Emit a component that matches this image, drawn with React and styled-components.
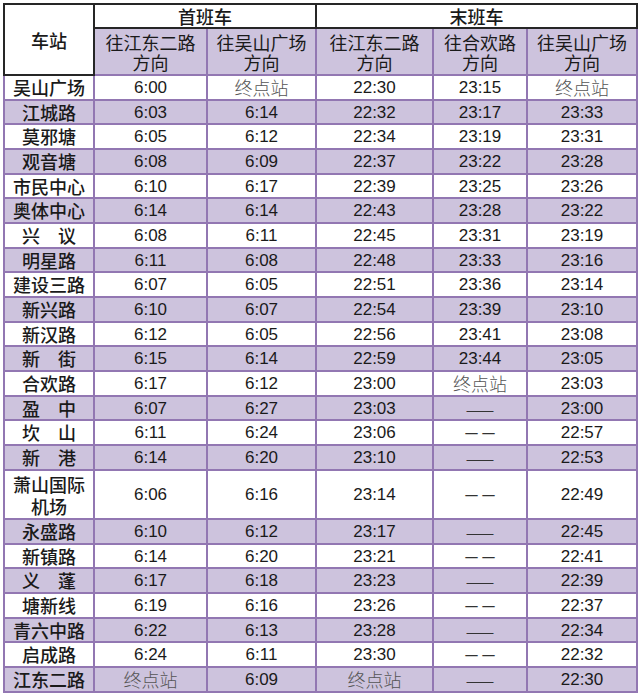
import React from "react";
import styled, { createGlobalStyle } from "styled-components";

const Global = createGlobalStyle`
  html, body { margin: 0; padding: 0; background: #ffffff; }
  body { font-family: "Liberation Sans", "Noto Sans CJK SC", sans-serif; color: #1a1a1a; }
`;

const PURPLE = "#9277b2";
const LAV = "#cdc3dd";
const DARK = "#262626";

const Page = styled.div`
  padding: 3px 0 0 3px;
`;

const Table = styled.table`
  border-collapse: collapse;
  table-layout: fixed;
  width: 633px;
`;

const HeadCell = styled.th`
  font-family: "Noto Sans CJK SC", sans-serif;
  font-weight: 500;
  font-size: 18px;
  line-height: 20px;
  padding: 0;
  text-align: center;
  color: #1a1a1a;
  background: ${(p) => (p.$lav ? LAV : "#ffffff")};
  border: 2px solid ${(p) => (p.$dark ? DARK : PURPLE)};
  height: ${(p) => p.$h}px;
`;

const SubHead = styled.div`
  display: flex;
  flex-direction: column;
  align-items: center;
  line-height: 20px;
  font-weight: 400;
`;

const Row = styled.tr`
  height: ${(p) => p.$h}px;
  background: ${(p) => (p.$lav ? LAV : "#ffffff")};
`;

const Cell = styled.td`
  padding: 0;
  text-align: center;
  vertical-align: middle;
  border: 2px solid ${PURPLE};
  font-size: 17px;
  line-height: 19px;
  color: #1a1a1a;
  font-family: ${(p) =>
    p.$kind === "num"
      ? `"Liberation Sans", Arial, sans-serif`
      : `"Noto Sans CJK SC", sans-serif`};
  ${(p) =>
    p.$kind === "end"
      ? `font-weight: 300; color: #555555; font-size: 18px;`
      : ""}
  ${(p) => (p.$kind === "dash" ? `color: #333333; font-size: 17px;` : "")}
`;

const Station = styled(Cell)`
  font-family: "Noto Sans CJK SC", sans-serif;
  font-size: 18px;
  font-weight: 500;
  line-height: ${(p) => (p.$double ? 22 : 19)}px;
  white-space: pre-line;
`;

const rows = [
  ["吴山广场", "6:00", "终点站", "22:30", "23:15", "终点站"],
  ["江城路", "6:03", "6:14", "22:32", "23:17", "23:33"],
  ["莫邪塘", "6:05", "6:12", "22:34", "23:19", "23:31"],
  ["观音塘", "6:08", "6:09", "22:37", "23:22", "23:28"],
  ["市民中心", "6:10", "6:17", "22:39", "23:25", "23:26"],
  ["奥体中心", "6:14", "6:14", "22:43", "23:28", "23:22"],
  ["兴　议", "6:08", "6:11", "22:45", "23:31", "23:19"],
  ["明星路", "6:11", "6:08", "22:48", "23:33", "23:16"],
  ["建设三路", "6:07", "6:05", "22:51", "23:36", "23:14"],
  ["新兴路", "6:10", "6:07", "22:54", "23:39", "23:10"],
  ["新汉路", "6:12", "6:05", "22:56", "23:41", "23:08"],
  ["新　街", "6:15", "6:14", "22:59", "23:44", "23:05"],
  ["合欢路", "6:17", "6:12", "23:00", "终点站", "23:03"],
  ["盈　中", "6:07", "6:27", "23:03", "——", "23:00"],
  ["坎　山", "6:11", "6:24", "23:06", "－－", "22:57"],
  ["新　港", "6:14", "6:20", "23:10", "——", "22:53"],
  ["萧山国际\n机场", "6:06", "6:16", "23:14", "－－", "22:49"],
  ["永盛路", "6:10", "6:12", "23:17", "——", "22:45"],
  ["新镇路", "6:14", "6:20", "23:21", "－－", "22:41"],
  ["义　蓬", "6:17", "6:18", "23:23", "——", "22:39"],
  ["塘新线", "6:19", "6:16", "23:26", "－－", "22:37"],
  ["青六中路", "6:22", "6:13", "23:28", "——", "22:34"],
  ["启成路", "6:24", "6:11", "23:30", "－－", "22:32"],
  ["江东二路", "终点站", "6:09", "终点站", "——", "22:30"],
];

const kindOf = (v) => {
  if (v === "终点站") return "end";
  if (v === "——" || v === "－－") return "dash";
  return "num";
};

const widths = [90, 113, 109, 117, 94, 110];

const subHeads = [
  ["往江东二路", "方向"],
  ["往吴山广场", "方向"],
  ["往江东二路", "方向"],
  ["往合欢路", "方向"],
  ["往吴山广场", "方向"],
];

const PITCH = 24.67;
let acc = 0;
const rowHeights = rows.map((r) => {
  const units = r[0].includes("\n") ? 2 : 1;
  const start = Math.round(acc * PITCH);
  acc += units;
  return Math.round(acc * PITCH) - start;
});

export default function App() {
  return (
    <Page>
      <Global />
      <Table>
        <colgroup>
          {widths.map((w, i) => (
            <col key={i} style={{ width: w }} />
          ))}
        </colgroup>
        <thead>
          <tr>
            <HeadCell $dark rowSpan={2} $h={24}>
              车站
            </HeadCell>
            <HeadCell $dark colSpan={2} $h={22}>
              首班车
            </HeadCell>
            <HeadCell $dark colSpan={3} $h={22}>
              末班车
            </HeadCell>
          </tr>
          <tr>
            {subHeads.map((s, i) => (
              <HeadCell key={i} $lav $h={45}>
                <SubHead>
                  <span>{s[0]}</span>
                  <span>{s[1]}</span>
                </SubHead>
              </HeadCell>
            ))}
          </tr>
        </thead>
        <tbody>
          {rows.map((r, i) => {
            const double = r[0].includes("\n");
            return (
              <Row key={i} $lav={i % 2 === 1} $h={rowHeights[i]}>
                <Station $double={double}>{r[0]}</Station>
                {r.slice(1).map((v, j) => (
                  <Cell key={j} $kind={kindOf(v)}>
                    {v}
                  </Cell>
                ))}
              </Row>
            );
          })}
        </tbody>
      </Table>
    </Page>
  );
}
